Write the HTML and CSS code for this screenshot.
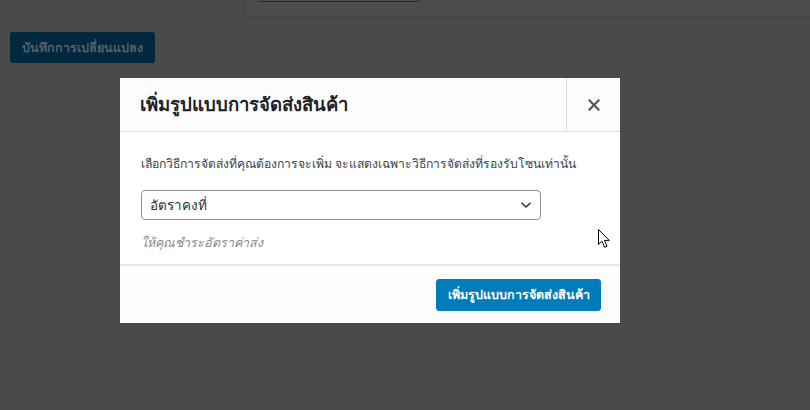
FILE: index.html
```html
<!DOCTYPE html>
<html lang="th">
<head>
<meta charset="utf-8">
<title>เพิ่มรูปแบบการจัดส่งสินค้า</title>
<link rel="stylesheet" href="styles.css">
</head>
<body>
<div class="page">
  <div class="top-box">
    <div class="ghost-btn"></div>
  </div>
  <button class="save-btn">บันทึกการเปลี่ยนแปลง</button>
</div>

<div class="modal">
  <header class="modal-header">
    <h1 class="modal-title">เพิ่มรูปแบบการจัดส่งสินค้า</h1>
    <button class="modal-close" aria-label="ปิด">
      <svg width="12" height="12" viewBox="0 0 12 12"><path d="M1.5 1.5 L10.5 10.5 M10.5 1.5 L1.5 10.5" stroke="#50575e" stroke-width="2.2" stroke-linecap="square"/></svg>
    </button>
  </header>
  <section class="modal-body">
    <p class="intro">เลือกวิธีการจัดส่งที่คุณต้องการจะเพิ่ม จะแสดงเฉพาะวิธีการจัดส่งที่รองรับโซนเท่านั้น</p>
    <div class="select">
      <span>อัตราคงที่</span>
      <svg width="12" height="8" viewBox="0 0 12 8"><path d="M1.5 1.8 L6 6 L10.5 1.8" fill="none" stroke="#2c3338" stroke-width="1.5"/></svg>
    </div>
    <p class="desc">ให้คุณชำระอัตราค่าส่ง</p>
  </section>
  <footer class="modal-footer">
    <button class="primary-btn">เพิ่มรูปแบบการจัดส่งสินค้า</button>
  </footer>
  <svg class="cursor" width="13" height="20" viewBox="0 0 13 20"><path d="M0.5 0.5 L0.5 15.5 L4 12.2 L6.6 18.3 L9 17.3 L6.5 11.4 L11.3 11.4 Z" fill="#fff" stroke="#000" stroke-width="1" stroke-linejoin="round"/></svg>
</div>
</body>
</html>
```
FILE: styles.css
```css
* { box-sizing: border-box; }
html, body { margin: 0; padding: 0; }
body {
  width: 810px;
  height: 410px;
  background: #4a4a4a;
  font-family: "Noto Sans", "DejaVu Sans", sans-serif;
  position: relative;
  overflow: hidden;
}
.page {
  display: flex;
  flex-direction: column;
  align-items: flex-start;
}
.top-box {
  margin-left: 245px;
  width: 565px;
  height: 17px;
  background: #4c4c4c;
  border-left: 1px solid #434343;
  border-bottom: 1px solid #434343;
  padding-left: 13px;
}
.ghost-btn {
  width: 160px;
  height: 2px;
  border: 1px solid #1b2f3a;
  border-top: none;
  border-radius: 0 0 3px 3px;
}
.save-btn {
  margin: 15px 0 0 10px;
  width: 145px;
  height: 31px;
  background: #02283f;
  border: none;
  border-radius: 3px;
  color: #52606a;
  font-family: inherit;
  font-size: 12.5px;
  font-weight: 600;
  padding: 0;
}
.modal {
  position: absolute;
  left: 120px;
  top: 78px;
  width: 500px;
  background: #fff;
  display: flex;
  flex-direction: column;
}
.modal-header {
  height: 54px;
  display: flex;
  align-items: stretch;
  background: #fcfcfc;
  border-bottom: 1px solid #dddddd;
}
.modal-title {
  flex: 1;
  margin: 0;
  padding-left: 20px;
  display: flex;
  align-items: center;
  font-size: 18.5px;
  font-weight: 700;
  color: #1d2327;
}
.modal-close {
  width: 54px;
  border: none;
  border-left: 1px solid #dddddd;
  background: transparent;
  display: flex;
  align-items: center;
  justify-content: center;
  padding: 0;
}
.modal-body {
  padding: 22px 21px 16px;
  height: 132px;
}
.intro {
  margin: 0 0 16px;
  font-size: 12.2px;
  color: #3c434a;
  line-height: 20px;
}
.select {
  width: 400px;
  height: 30px;
  border: 1px solid #8c8f94;
  border-radius: 4px;
  display: flex;
  align-items: center;
  justify-content: space-between;
  padding: 0 8px 0 8px;
  font-size: 13.5px;
  color: #2c3338;
}
.desc {
  margin: 13px 0 0;
  font-size: 12.5px;
  font-style: italic;
  color: #8a8a8a;
}
.modal-footer {
  height: 59px;
  background: #fcfcfc;
  border-top: 2px solid #e6e6e6;
  display: flex;
  align-items: center;
  justify-content: flex-end;
  padding: 0 19px 0 0;
}
.primary-btn {
  width: 165px;
  height: 32px;
  background: #007cba;
  border: 1px solid #007cba;
  border-radius: 3px;
  color: #fff;
  font-family: inherit;
  font-size: 12.5px;
  font-weight: 600;
  padding: 0;
}
.cursor {
  position: absolute;
  left: 478px;
  top: 151px;
}
```
